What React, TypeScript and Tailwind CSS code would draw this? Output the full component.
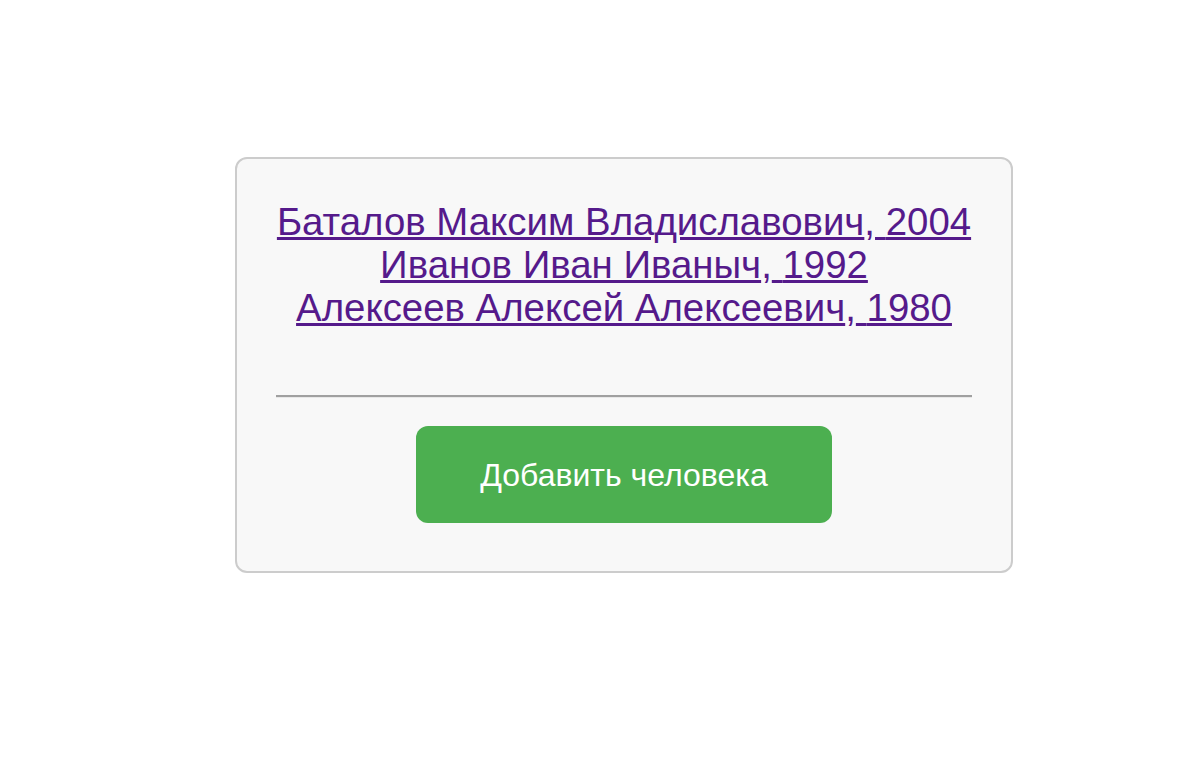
const people = [
  { name: "Баталов Максим Владиславович", year: 2004 },
  { name: "Иванов Иван Иваныч", year: 1992 },
  { name: "Алексеев Алексей Алексеевич", year: 1980 },
];

export default function App() {
  return (
    <div className="min-h-screen bg-white flex justify-center pl-[50px] pt-[157px] font-['Liberation_Sans',Arial,sans-serif]">
      <div className="w-[778px] h-[416px] self-start rounded-[12px] border-2 border-[#cccccc] bg-[#f8f8f8] px-[39px] pt-[41px] flex flex-col">
        {/* People list */}
        <div className="text-center text-[38.4px] leading-[43px] text-[#551a8b]">
          {people.map((p) => (
            <div key={p.name}>
              <a href="#" className="underline">
                {p.name}
              </a>
              ,
              <a href="#" className="underline">
                {" "}
                {p.year}
              </a>
            </div>
          ))}
        </div>

        <hr className="mt-[66px] h-[3px] border-0 border-t-2 border-b border-t-[#a0a0a0] border-b-[#e8e8e8]" />

        <div className="flex justify-center mt-[28px]">
          <button className="w-[416px] h-[97px] rounded-[12px] bg-[#4caf50] text-white text-[32px]">
            Добавить человека
          </button>
        </div>
      </div>
    </div>
  );
}
